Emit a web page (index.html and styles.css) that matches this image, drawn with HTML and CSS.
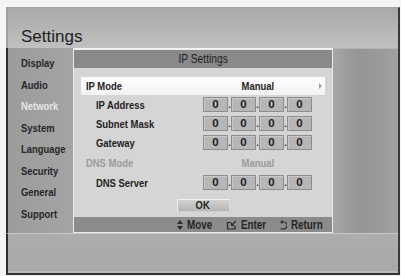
FILE: index.html
```html
<!DOCTYPE html>
<html lang="en-US">
  <head>
    <meta charset="utf-8"/>
    <title>Settings - IP Settings</title>
    <link rel="stylesheet" href="styles.css">
  </head>

  <body>
    <div class="tv">
      <div class="title">Settings</div>

      <div class="main">
        <ul class="menu">
          <li>Display</li>
          <li>Audio</li>
          <li class="current">Network</li>
          <li>System</li>
          <li>Language</li>
          <li>Security</li>
          <li>General</li>
          <li>Support</li>
        </ul>

        <div class="dialog">
          <div class="dialog-head"><span class="n mid">IP Settings</span></div>
          <div class="dialog-body">
            <div class="row selected">
              <span class="label"><span class="n">IP Mode</span></span>
              <span class="value"><span class="n mid">Manual</span></span>
              <span class="arrow"></span>
            </div>
            <div class="row">
              <span class="label sub"><span class="n">IP Address</span></span>
              <span class="ip"><b>0</b><i>.</i><b>0</b><i>.</i><b>0</b><i>.</i><b>0</b></span>
            </div>
            <div class="row">
              <span class="label sub"><span class="n">Subnet Mask</span></span>
              <span class="ip"><b>0</b><i>.</i><b>0</b><i>.</i><b>0</b><i>.</i><b>0</b></span>
            </div>
            <div class="row">
              <span class="label sub"><span class="n">Gateway</span></span>
              <span class="ip"><b>0</b><i>.</i><b>0</b><i>.</i><b>0</b><i>.</i><b>0</b></span>
            </div>
            <div class="row disabled tall">
              <span class="label"><span class="n">DNS Mode</span></span>
              <span class="value"><span class="n mid">Manual</span></span>
            </div>
            <div class="row">
              <span class="label sub"><span class="n">DNS Server</span></span>
              <span class="ip"><b>0</b><i>.</i><b>0</b><i>.</i><b>0</b><i>.</i><b>0</b></span>
            </div>
            <div class="actions">
              <button class="ok"><span class="n mid">OK</span></button>
            </div>
          </div>
          <div class="dialog-foot">
            <span class="hint">
              <svg width="6" height="10" viewBox="0 0 6 10"><polygon points="0,4 3,0 6,4" /><polygon points="0,6 3,10 6,6" /></svg>
              <span class="n">Move</span>
            </span>
            <span class="hint">
              <svg width="11" height="10" viewBox="0 0 11 10" class="line"><path d="M5 2.5 H1.5 V9 H9 V5.5" /><path d="M10 1 L5.5 5.5" /><path d="M5.5 2.8 V5.5 H8.2" /></svg>
              <span class="n">Enter</span>
            </span>
            <span class="hint">
              <svg width="8" height="10" viewBox="0 0 8 10" class="line"><path d="M2 2 H4.5 A3.5 3.5 0 0 1 4.5 9 H1.5" /><path d="M3.5 0.5 L2 2 L3.5 3.5" /></svg>
              <span class="n">Return</span>
            </span>
          </div>
        </div>

        <div class="side"></div>
      </div>

      <div class="bottom"></div>
    </div>
  </body>

</html>
```

FILE: styles.css
```css
* {
  box-sizing: border-box;
}

body {
  background-color: #f4f4f4;
  color: #222;
  font: bold 11.5px "Liberation Sans", Arial, sans-serif;
  margin: 0;
}

/* no condensed face installed, so squeeze Liberation Sans to narrow widths */
.n {
  display: inline-block;
  white-space: nowrap;
  transform: scaleX(0.82);
  transform-origin: left center;
}

.n.mid {
  transform-origin: center;
}

.tv {
  margin: 7px 0 0 6px;
  width: 394px;
  height: 268px;
  display: flex;
  flex-direction: column;
  border-top: 1px solid #a4a4a4;
  border-right: 2px solid #3a3a3a;
  border-bottom: 2px solid #333;
}

.title {
  height: 40px;
  padding: 19px 0 0 13px;
  font: normal 17px/20px "Liberation Sans", Arial, sans-serif;
  color: #1e1e1e;
  background: linear-gradient(#a9a9a9, #b7b7b7 60%, #c0c0c0);
  border-left: 2px solid #a0a0a0;
}

.main {
  display: flex;
  height: 185px;
  border-left: 2px solid #2e2e2e;
}

.menu {
  list-style: none;
  margin: 0;
  padding: 5px 0 0 13px;
  width: 65px;
  background: linear-gradient(to right, #9c9c9c, #a4a4a4);
}

.menu li {
  height: 21.5px;
  line-height: 21.5px;
  color: #262626;
  white-space: nowrap;
  transform: scaleX(0.82);
  transform-origin: left center;
}

.menu li.current {
  color: #e6e6e6;
}

.dialog {
  width: 260px;
  margin-top: 1px;
  border: 1px solid #ececec;
  display: flex;
  flex-direction: column;
}

.dialog-head {
  height: 18px;
  line-height: 18px;
  text-align: center;
  background: #898989;
  color: #1e1e1e;
  font-weight: normal;
  font-size: 12.5px;
}

.dialog-body {
  flex: 1;
  background: #d5d5d5;
  padding: 9px 7px 0;
}

.row {
  display: flex;
  align-items: center;
  height: 19px;
}

.row.tall {
  height: 21px;
}

.row.selected {
  height: 18px;
  background: linear-gradient(#ffffff, #f2f2f2);
}

.label {
  width: 122px;
  padding-left: 5px;
}

.label.sub {
  padding-left: 15px;
}

.value {
  width: 109px;
  text-align: center;
}

.disabled {
  color: #9a9a9a;
}

.arrow {
  margin-left: 7px;
  width: 0;
  height: 0;
  border-top: 3px solid transparent;
  border-bottom: 3px solid transparent;
  border-left: 3px solid #a0a0a0;
}

.ip {
  display: flex;
  height: 15px;
}

.ip b {
  width: 25px;
  height: 15px;
  line-height: 13px;
  text-align: center;
  background: #b6b6b6;
  border: 1px solid #8c8c8c;
  box-shadow: inset 1px 1px 0 #c8c8c8;
}

.ip i {
  width: 3px;
  font-style: normal;
  line-height: 17px;
  text-align: center;
  font-size: 9px;
}

.actions {
  display: flex;
  justify-content: center;
  margin-top: 7px;
}

.ok {
  width: 53px;
  height: 13px;
  padding: 0;
  font: inherit;
  line-height: 11px;
  color: #222;
  border: 1px solid #f2f2f2;
  border-right-color: #dadada;
  border-bottom-color: #cfcfcf;
  background: linear-gradient(#d2d2d2, #b6b6b6);
}

.dialog-foot {
  height: 15px;
  background: #8b8b8b;
  display: flex;
  justify-content: flex-end;
  align-items: center;
  gap: 8px;
  padding-right: 2px;
  color: #262626;
  font-size: 12px;
}

.hint {
  display: flex;
  align-items: center;
  gap: 4px;
}

.hint svg {
  fill: #2a2a2a;
}

.hint svg.line {
  fill: none;
  stroke: #2a2a2a;
  stroke-width: 1.2;
}

.side {
  flex: 1;
  background: linear-gradient(to right, #a6a6a6, #959595 40%, #9c9c9c 80%, #a2a2a2);
  border-top: 1px solid #b2b2b2;
}

.bottom {
  flex: 1;
  background: linear-gradient(#adadad, #a8a8a8);
  border-top: 1px solid #c9c9c9;
  border-left: 2px solid #2e2e2e;
  box-shadow: inset 0 -2px 0 #bcbcbc;
}
```
